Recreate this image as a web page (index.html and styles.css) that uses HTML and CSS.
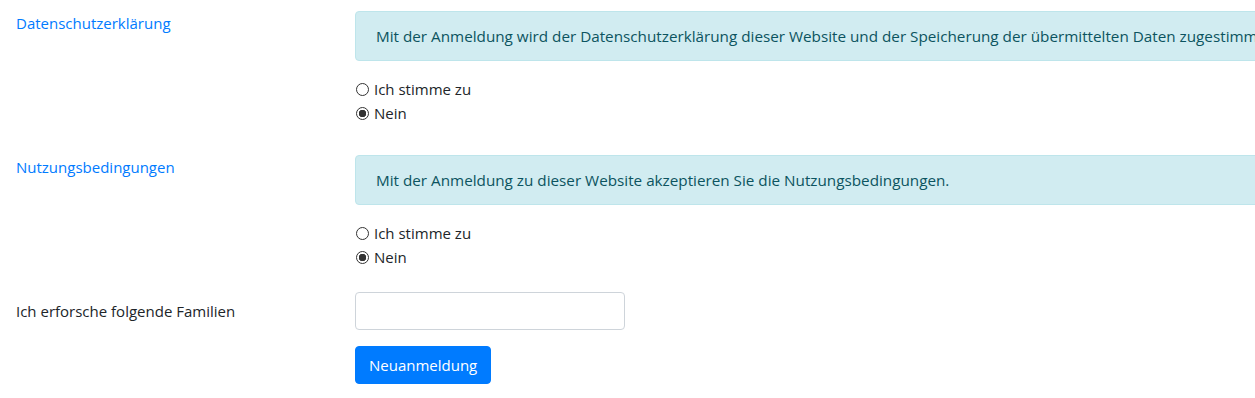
FILE: index.html
```html
<!DOCTYPE html>
<html lang="de">
<head>
    <meta charset="UTF-8">
    <meta name="viewport" content="width=device-width, initial-scale=1.0">
    <title>Neuanmeldung</title>
    <link rel="stylesheet" href="styles.css">
</head>
<body>
    <form class="register" action="#" method="post">
        <div class="form-row consent">
            <a class="row-label link" href="#">Datenschutzerklärung</a>
            <div class="row-field">
                <div class="alert">Mit der Anmeldung wird der Datenschutzerklärung dieser Website und der Speicherung der übermittelten Daten zugestimmt.</div>
                <label class="radio"><input type="radio" name="privacy" value="yes"> Ich stimme zu</label>
                <label class="radio"><input type="radio" name="privacy" value="no" checked> Nein</label>
            </div>
        </div>

        <div class="form-row consent">
            <a class="row-label link" href="#">Nutzungsbedingungen</a>
            <div class="row-field">
                <div class="alert">Mit der Anmeldung zu dieser Website akzeptieren Sie die Nutzungsbedingungen.</div>
                <label class="radio"><input type="radio" name="terms" value="yes"> Ich stimme zu</label>
                <label class="radio"><input type="radio" name="terms" value="no" checked> Nein</label>
            </div>
        </div>

        <div class="form-row families">
            <label class="row-label" for="families">Ich erforsche folgende Familien</label>
            <div class="row-field">
                <input type="text" id="families" name="families">
            </div>
        </div>

        <div class="form-row submit">
            <span class="row-label"></span>
            <div class="row-field">
                <button type="submit">Neuanmeldung</button>
            </div>
        </div>
    </form>
</body>
</html>
```

FILE: styles.css
```css
body {
    margin: 0;
    padding: 0;
    overflow: hidden;
    background: #ffffff;
    color: #212529;
    font-family: 'Open Sans', 'Segoe UI', sans-serif;
    font-size: 15px;
    line-height: 24px;
}

.register {
    width: 1500px;
    padding: 11px 0 0 16px;
}

.form-row {
    display: grid;
    grid-template-columns: 339px 1fr;
}

.consent {
    margin-bottom: 30px;
}

.families {
    margin-top: -7px;
    margin-bottom: 16px;
    align-items: center;
}

.row-label {
    padding-top: 0;
}

.link {
    color: #007bff;
    text-decoration: none;
}

.row-field {
    display: flex;
    flex-direction: column;
    align-items: flex-start;
}

.alert {
    box-sizing: border-box;
    width: 100%;
    padding: 12px 20px;
    margin-bottom: 16px;
    background: #d1ecf1;
    border: 1px solid #bee5eb;
    border-radius: 4px;
    color: #0c5460;
    font-size: 15.25px;
    white-space: nowrap;
}

.radio {
    display: flex;
    align-items: center;
    gap: 5px;
}

.radio input {
    appearance: none;
    -webkit-appearance: none;
    box-sizing: border-box;
    width: 13px;
    height: 13px;
    margin: 0 0 0 1px;
    border: 1px solid #333333;
    border-radius: 50%;
    background: #ffffff;
}

.radio input:checked {
    background: radial-gradient(circle, #333333 0 3.5px, #ffffff 4px);
}

.families input {
    box-sizing: border-box;
    width: 270px;
    height: 38px;
    border: 1px solid #ced4da;
    border-radius: 4px;
    padding: 6px 12px;
    font: inherit;
}

.submit button {
    box-sizing: border-box;
    height: 38px;
    padding: 6px 13px;
    border: 1px solid #007bff;
    border-radius: 4px;
    background: #007bff;
    color: #ffffff;
    font: inherit;
    cursor: pointer;
}
```
